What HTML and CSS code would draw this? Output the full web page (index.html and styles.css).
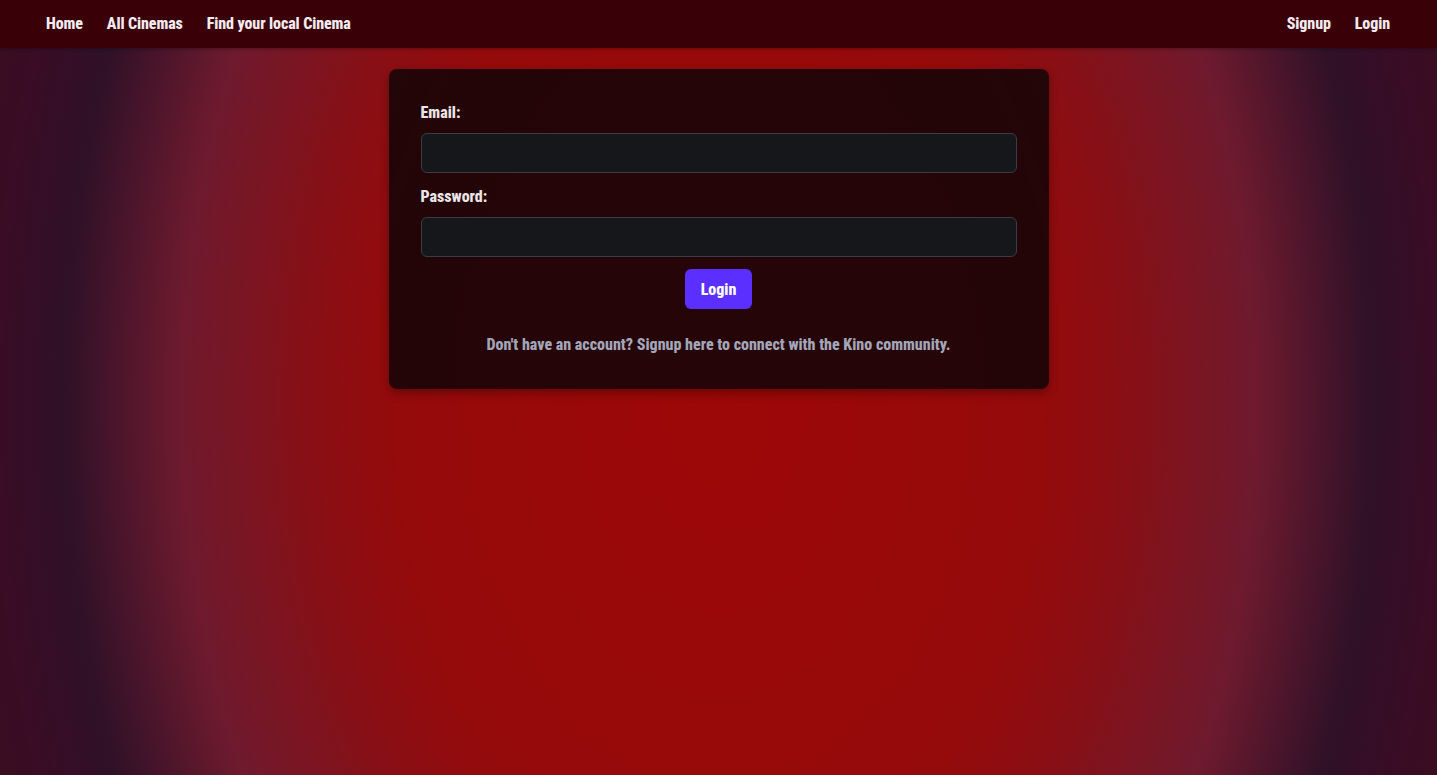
FILE: index.html
```html
<!DOCTYPE html>
<html lang="en">
<head>
<meta charset="utf-8">
<title>Login - Kino</title>
<link rel="stylesheet" href="styles.css">
</head>
<body>
<nav class="topnav">
  <div class="nav-group">
    <a class="nav-link" href="#">Home</a>
    <a class="nav-link" href="#">All Cinemas</a>
    <a class="nav-link" href="#">Find your local Cinema</a>
  </div>
  <div class="nav-group">
    <a class="nav-link" href="#">Signup</a>
    <a class="nav-link" href="#">Login</a>
  </div>
</nav>
<main class="page">
  <form class="card">
    <label class="field-label" for="email">Email:</label>
    <input class="field-input" id="email" type="email">
    <label class="field-label" for="password">Password:</label>
    <input class="field-input" id="password" type="password">
    <div class="actions">
      <button class="btn" type="button">Login</button>
    </div>
    <p class="note">Don't have an account? Signup here to connect with the Kino community.</p>
  </form>
</main>
</body>
</html>
```
FILE: styles.css
```css
* { box-sizing: border-box; }

html, body {
  margin: 0;
  padding: 0;
  min-height: 100%;
}

body {
  min-height: 100vh;
  font-family: "Roboto Condensed", Roboto, "DejaVu Sans Condensed", sans-serif;
  font-stretch: 75%;
  font-weight: 800;
  background-color: #3a0e1c;
  background-image: radial-gradient(ellipse 718px 1077px at 50% 52%,
    #9d0707 0%,
    #950a0b 45%,
    #8a0f14 56%,
    #6e1a2e 75%,
    #2f1128 91%,
    #3a0c26 100%,
    #3a0e1c 110%);
  color: #ece6e9;
}

.topnav {
  height: 48px;
  display: flex;
  align-items: center;
  justify-content: space-between;
  padding: 0 47px 0 46px;
  background: #3a0008;
  box-shadow: 0 1px 3px rgba(0, 0, 0, 0.3);
}

.nav-group {
  display: flex;
  gap: 24px;
}

.nav-link {
  color: #f3ebef;
  text-decoration: none;
  font-size: 16px;
  line-height: 24px;
  letter-spacing: -0.1px;
}

.page {
  display: flex;
  justify-content: center;
  padding-top: 21px;
}

.card {
  width: 660px;
  padding: 32px;
  border-radius: 8px;
  background: rgba(16, 5, 7, 0.85);
  box-shadow: 0 4px 10px rgba(0, 0, 0, 0.3);
  display: flex;
  flex-direction: column;
}

.field-label {
  display: block;
  font-size: 16px;
  line-height: 24px;
  color: #ebe5e8;
  margin-bottom: 8px;
}

.field-input {
  display: block;
  width: 100%;
  height: 40px;
  margin: 0 0 12px;
  background: #16171b;
  border: 1px solid #3a3d46;
  border-radius: 6px;
  color: #fff;
  font: inherit;
  padding: 0 12px;
}

.actions {
  display: flex;
  justify-content: center;
}

.btn {
  height: 40px;
  padding: 0 16px;
  background: #5b2fff;
  border: none;
  border-radius: 6px;
  color: #fff;
  font-family: inherit;
  font-stretch: inherit;
  font-weight: 800;
  font-size: 16px;
}

.note {
  margin: 24px 0 0;
  text-align: center;
  font-size: 16px;
  line-height: 24px;
  color: #a3a6b8;
}
```
